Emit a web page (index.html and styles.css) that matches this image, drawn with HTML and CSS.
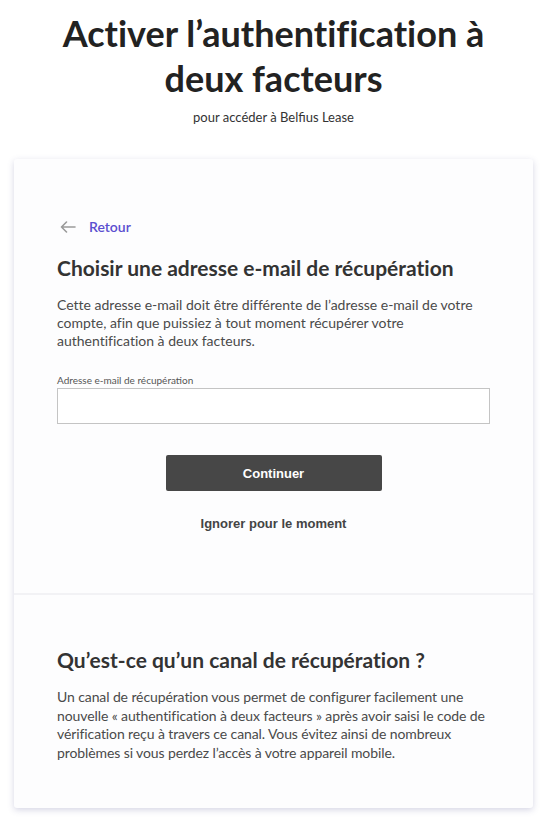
FILE: index.html
```html
<!DOCTYPE html>
<html lang="fr">
<head>
  <meta charset="UTF-8">
  <meta name="viewport" content="width=device-width, initial-scale=1.0">
  <title>Activer l’authentification à deux facteurs</title>
  <link rel="stylesheet" href="styles.css">
</head>
<body>
  <header class="top">
    <h1>Activer l’authentification à deux facteurs</h1>
    <p class="sub">pour accéder à Belfius Lease</p>
  </header>

  <main class="card">
    <section class="card-main">
      <a class="back" href="#">
        <svg width="16" height="12" viewBox="0 0 16 12" fill="none" stroke="#9a9a9a" stroke-width="1.6" stroke-linecap="round" stroke-linejoin="round">
          <path d="M15 6H1.5M6.5 1L1.5 6l5 5"/>
        </svg>
        <span>Retour</span>
      </a>

      <h2>Choisir une adresse e-mail de récupération</h2>
      <p class="text">Cette adresse e-mail doit être différente de l’adresse e-mail de votre compte, afin que puissiez à tout moment récupérer votre authentification à deux facteurs.</p>

      <label class="field-label" for="mail">Adresse e-mail de récupération</label>
      <input class="field" type="email" id="mail">

      <div class="actions">
        <button class="btn" type="button">Continuer</button>
        <a class="skip" href="#">Ignorer pour le moment</a>
      </div>
    </section>

    <section class="card-info">
      <h2>Qu’est-ce qu’un canal de récupération ?</h2>
      <p class="text">Un canal de récupération vous permet de configurer facilement une nouvelle « authentification à deux facteurs » après avoir saisi le code de vérification reçu à travers ce canal. Vous évitez ainsi de nombreux problèmes si vous perdez l’accès à votre appareil mobile.</p>
    </section>
  </main>
</body>
</html>
```

FILE: styles.css
```css
* {
  box-sizing: border-box;
}

body {
  margin: 0;
  padding: 0 8px 11px 14px;
  background: #fff;
  font-family: Lato, "Open Sans", sans-serif;
  color: #222;
}

.top {
  text-align: center;
  padding-top: 11px;
}

.top h1 {
  margin: 0 auto;
  max-width: 460px;
  font-size: 36px;
  line-height: 45px;
  font-weight: 700;
  color: #222;
  font-variant-ligatures: none;
}

.sub {
  margin: 7px 0 0;
  font-size: 13px;
  line-height: 18px;
  color: #333;
}

.card {
  margin-top: 33px;
  width: 519px;
  background: #fdfdfe;
  border-radius: 3px;
  box-shadow: 0 2px 6px rgba(90, 90, 150, 0.25);
}

.card-main {
  padding: 59px 43px 62px 43px;
  border-bottom: 2px solid #f2f2f5;
}

.back {
  display: flex;
  align-items: center;
  gap: 13px;
  text-decoration: none;
  color: #5b4fd0;
  font-size: 14px;
  font-weight: 600;
  padding-left: 3px;
}

.card h2 {
  margin: 20px 0 0;
  font-size: 21px;
  line-height: 26px;
  font-weight: 700;
  color: #333;
  font-variant-ligatures: none;
}

.text {
  margin: 15px 0 0;
  font-size: 14px;
  line-height: 18px;
  color: #4a4a4a;
  font-variant-ligatures: none;
}

.field-label {
  display: block;
  margin-top: 24px;
  font-size: 10px;
  line-height: 13px;
  color: #555;
}

.field {
  display: block;
  width: 100%;
  height: 36px;
  margin-top: 1px;
  border: 1px solid #c4c4c4;
  background: #fff;
  border-radius: 0;
}

.actions {
  display: flex;
  flex-direction: column;
  align-items: center;
  margin-top: 31px;
}

.btn {
  width: 216px;
  height: 36px;
  border: 0;
  border-radius: 2px;
  background: #474747;
  color: #fff;
  font-family: "Liberation Sans", Arial, sans-serif;
  font-weight: 700;
  font-size: 13px;
}

.skip {
  margin-top: 25px;
  font-family: "Liberation Sans", Arial, sans-serif;
  font-weight: 700;
  font-size: 13px;
  color: #444;
  text-decoration: none;
}

.card-info {
  padding: 52px 30px 46px 43px;
}

.card-info h2 {
  margin-top: 0;
}

.card-info .text {
  margin-top: 15px;
  line-height: 18.5px;
  letter-spacing: -0.1px;
}
```
